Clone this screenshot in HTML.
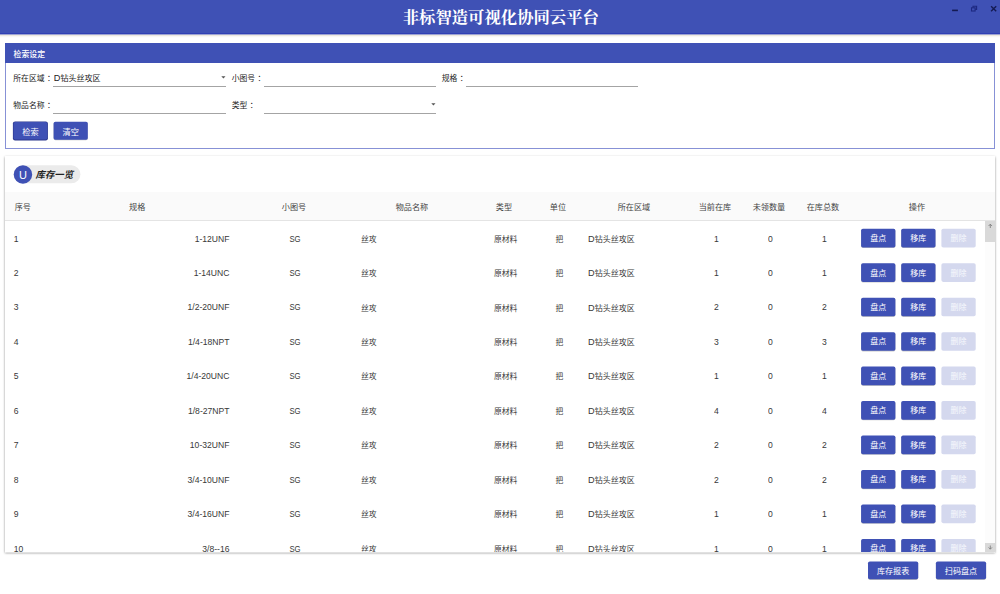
<!DOCTYPE html><html lang="zh-CN"><head><meta charset="utf-8"><title>非标智造可视化协同云平台</title><style>
*{box-sizing:border-box;margin:0;padding:0}
html,body{width:1000px;height:594px;overflow:hidden;background:#fff}
body{position:relative;font-family:"Liberation Sans","Noto Sans CJK SC",sans-serif;color:#222;font-size:7.8px}
.abs{position:absolute}
#titlebar{position:absolute;left:0;top:0;width:1000px;height:38px;background:linear-gradient(to bottom,#3f51b5 0,#3f51b5 33px,#3040b4 33px,#3040b4 34px,#9da3d2 34px,#9da3d2 35px,#ece8e0 35px,#ece8e0 36px,#f8f7f4 36px,#f8f7f4 37px,#fdfdfd 37px,#fdfdfd 38px)}
#title{position:absolute;left:0;width:1000px;top:0;height:34px;line-height:34px;text-align:center;color:#fff;font-family:"Liberation Serif","Noto Serif CJK SC",serif;font-size:16.35px;font-weight:700;padding-top:1.3px;padding-left:1.6px}
#panel{position:absolute;left:5px;top:43px;width:990px;height:106px;border:1px solid #8791d6;background:#fff}
#phead{position:absolute;left:-1px;top:-1px;width:990px;height:20px;background:#3f51b5;color:#fff;line-height:23px;padding-left:8.5px;font-size:7.9px;font-weight:500}
.lbl{position:absolute;height:12px;line-height:12px;white-space:nowrap;color:#222}
.co{position:relative;left:2.4px}
.D{font-size:9.2px;line-height:1px}
.line{position:absolute;height:1px;background:#a4a4a4}
.bt{position:absolute;z-index:1;width:34.3px;height:18px;line-height:18px;font-size:8px;color:#fff;text-align:center;white-space:nowrap}
.bt.dis{color:#f7f8fd}
#card{position:absolute;left:5px;top:156px;width:990px;height:396px;background:#fff;box-shadow:0 0.6px 0 0 #fff,0 1px 2.2px rgba(0,0,0,.45);overflow:hidden}
#thead{position:absolute;left:0;top:36px;width:990px;height:29px;background:#fafafa;border-bottom:1px solid #e4e4e4}
.cell{position:absolute;height:12px;line-height:12px;white-space:nowrap;color:#383838}
.hc{color:#444;font-size:8.15px}
</style></head><body>
<div id="titlebar"></div><div id="title">非标智造可视化协同云平台</div>
<svg class="abs" style="left:945px;top:0" width="55" height="34" viewBox="0 0 55 34"><rect x="7.1" y="9.6" width="5.8" height="1.6" fill="#141a52"/><rect x="26.5" y="7.8" width="3.6" height="3.2" fill="none" stroke="#1d2880" stroke-width="1.1"/><path d="M28 7.6 V6.2 H31.6 V9.4 H30.3" fill="none" stroke="#1d2880" stroke-width="1.1"/><path d="M46.1 6.3 L51.2 11.2 M51.2 6.3 L46.1 11.2" stroke="#141a52" stroke-width="1.4" fill="none"/></svg>
<div id="panel"><div id="phead">检索设定</div></div>
<div class="lbl" style="left:13.3px;top:73.2px;">所在区域<span class="co">：</span></div>
<div class="lbl" style="left:53.8px;top:73.3px;font-size:8.05px"><span class="D" style="font-size:9.2px">D</span>钻头丝攻区</div>
<div class="line" style="left:53px;top:86px;width:173px"></div>
<svg class="abs" style="left:219px;top:74px" width="10" height="8" viewBox="0 0 10 8"><path d="M2.3 2.2 H6.5 L4.4 4.6 Z" fill="#555"/></svg>
<div class="lbl" style="left:231.7px;top:73.2px;">小图号<span class="co">：</span></div>
<div class="line" style="left:264px;top:86px;width:172px"></div>
<div class="lbl" style="left:441.7px;top:73.2px;">规格<span class="co">：</span></div>
<div class="line" style="left:466px;top:86px;width:172px"></div>
<div class="lbl" style="left:13.3px;top:100.2px;">物品名称<span class="co">：</span></div>
<div class="line" style="left:53px;top:113px;width:173px"></div>
<div class="lbl" style="left:231.7px;top:100.2px;">类型<span class="co">：</span></div>
<div class="line" style="left:264px;top:113px;width:172px"></div>
<svg class="abs" style="left:429px;top:101px" width="10" height="8" viewBox="0 0 10 8"><path d="M2.3 2.2 H6.5 L4.4 4.6 Z" fill="#555"/></svg>
<svg class="abs" style="left:5px;top:115px" width="100" height="32" viewBox="0 0 100 32"><rect x="7.9" y="6.4" width="35" height="19.1" rx="2.2" fill="#2b378c"/><rect x="8.5" y="6.9" width="33.8" height="17.6" rx="1.8" fill="#3f51b5"/><rect x="48.6" y="7.3" width="34.2" height="17.9" rx="1.8" fill="rgba(0,0,0,.25)"/><rect x="48.6" y="6.8" width="34.2" height="17.9" rx="1.8" fill="#3f51b5"/></svg>
<div class="bt" style="left:13.3px;top:123.8px;width:34.2px;font-size:8.2px">检索</div>
<div class="bt" style="left:53.6px;top:123.8px;width:34.2px;font-size:8.2px">清空</div>
<div id="card">
<svg class="abs" style="left:0;top:0" width="100" height="36" viewBox="0 0 100 36"><rect x="8.8" y="9.3" width="66.6" height="18" rx="9" fill="#ebebeb"/><circle cx="17.95" cy="18.45" r="9.25" fill="#3f51b5"/></svg>
<div class="abs" style="left:8.7px;top:9.5px;width:18.5px;height:18px;color:#fff;text-align:center;line-height:18px;font-size:11px">U</div>
<div class="abs" style="left:30.5px;top:12.8px;height:12px;line-height:12px;font-size:9.4px;font-weight:700;font-style:italic;color:#222;white-space:nowrap">库存一览</div>
<div id="thead"></div>
<div class="cell hc" style="left:9.7px;top:45.599999999999994px;">序号</div>
<div class="cell hc" style="left:124px;top:45.599999999999994px;">规格</div>
<div class="cell hc" style="left:229px;width:120px;text-align:center;top:45.599999999999994px;">小图号</div>
<div class="cell hc" style="left:347px;width:120px;text-align:center;top:45.599999999999994px;">物品名称</div>
<div class="cell hc" style="left:439px;width:120px;text-align:center;top:45.599999999999994px;">类型</div>
<div class="cell hc" style="left:493px;width:120px;text-align:center;top:45.599999999999994px;">单位</div>
<div class="cell hc" style="left:569px;width:120px;text-align:center;top:45.599999999999994px;">所在区域</div>
<div class="cell hc" style="left:650px;width:120px;text-align:center;top:45.599999999999994px;">当前在库</div>
<div class="cell hc" style="left:704px;width:120px;text-align:center;top:45.599999999999994px;">未领数量</div>
<div class="cell hc" style="left:758px;width:120px;text-align:center;top:45.599999999999994px;">在库总数</div>
<div class="cell hc" style="left:852px;width:120px;text-align:center;top:45.599999999999994px;">操作</div>
<div class="cell " style="left:8.8px;top:76.5px;font-size:8.6px;transform:scale(1,1.13);transform-origin:0 60%">1</div>
<div class="cell " style="right:765.5px;top:76.5px;font-size:8.6px;transform:scale(1,1.13);transform-origin:100% 60%">1-12UNF</div>
<div class="cell " style="left:230.2px;width:120px;text-align:center;top:76.5px;font-size:8.6px;transform:scale(.9,1.13);transform-origin:50% 60%">SG</div>
<div class="cell " style="left:356px;top:77.6px;">丝攻</div>
<div class="cell " style="left:489px;top:77.6px;">原材料</div>
<div class="cell " style="left:494.5px;width:120px;text-align:center;top:77.6px;">把</div>
<div class="cell " style="left:583px;top:77.6px;font-size:8px"><span class="D">D</span>钻头丝攻区</div>
<div class="cell " style="left:651.5px;width:120px;text-align:center;top:76.5px;font-size:8.6px;transform:scale(1,1.13);transform-origin:50% 60%">1</div>
<div class="cell " style="left:705.5px;width:120px;text-align:center;top:76.5px;font-size:8.6px;transform:scale(1,1.13);transform-origin:50% 60%">0</div>
<div class="cell " style="left:759.5px;width:120px;text-align:center;top:76.5px;font-size:8.6px;transform:scale(1,1.13);transform-origin:50% 60%">1</div>
<div class="bt " style="left:856.10px;top:74.05px">盘点</div>
<div class="bt " style="left:896.20px;top:74.05px">移库</div>
<div class="bt dis" style="left:936.40px;top:74.05px">删除</div>
<div class="cell " style="left:8.8px;top:110.95999999999998px;font-size:8.6px;transform:scale(1,1.13);transform-origin:0 60%">2</div>
<div class="cell " style="right:765.5px;top:110.95999999999998px;font-size:8.6px;transform:scale(1,1.13);transform-origin:100% 60%">1-14UNC</div>
<div class="cell " style="left:230.2px;width:120px;text-align:center;top:110.95999999999998px;font-size:8.6px;transform:scale(.9,1.13);transform-origin:50% 60%">SG</div>
<div class="cell " style="left:356px;top:112.06px;">丝攻</div>
<div class="cell " style="left:489px;top:112.06px;">原材料</div>
<div class="cell " style="left:494.5px;width:120px;text-align:center;top:112.06px;">把</div>
<div class="cell " style="left:583px;top:112.06px;font-size:8px"><span class="D">D</span>钻头丝攻区</div>
<div class="cell " style="left:651.5px;width:120px;text-align:center;top:110.95999999999998px;font-size:8.6px;transform:scale(1,1.13);transform-origin:50% 60%">1</div>
<div class="cell " style="left:705.5px;width:120px;text-align:center;top:110.95999999999998px;font-size:8.6px;transform:scale(1,1.13);transform-origin:50% 60%">0</div>
<div class="cell " style="left:759.5px;width:120px;text-align:center;top:110.95999999999998px;font-size:8.6px;transform:scale(1,1.13);transform-origin:50% 60%">1</div>
<div class="bt " style="left:856.10px;top:108.51px">盘点</div>
<div class="bt " style="left:896.20px;top:108.51px">移库</div>
<div class="bt dis" style="left:936.40px;top:108.51px">删除</div>
<div class="cell " style="left:8.8px;top:145.41999999999996px;font-size:8.6px;transform:scale(1,1.13);transform-origin:0 60%">3</div>
<div class="cell " style="right:765.5px;top:145.41999999999996px;font-size:8.6px;transform:scale(1,1.13);transform-origin:100% 60%">1/2-20UNF</div>
<div class="cell " style="left:230.2px;width:120px;text-align:center;top:145.41999999999996px;font-size:8.6px;transform:scale(.9,1.13);transform-origin:50% 60%">SG</div>
<div class="cell " style="left:356px;top:146.51999999999998px;">丝攻</div>
<div class="cell " style="left:489px;top:146.51999999999998px;">原材料</div>
<div class="cell " style="left:494.5px;width:120px;text-align:center;top:146.51999999999998px;">把</div>
<div class="cell " style="left:583px;top:146.51999999999998px;font-size:8px"><span class="D">D</span>钻头丝攻区</div>
<div class="cell " style="left:651.5px;width:120px;text-align:center;top:145.41999999999996px;font-size:8.6px;transform:scale(1,1.13);transform-origin:50% 60%">2</div>
<div class="cell " style="left:705.5px;width:120px;text-align:center;top:145.41999999999996px;font-size:8.6px;transform:scale(1,1.13);transform-origin:50% 60%">0</div>
<div class="cell " style="left:759.5px;width:120px;text-align:center;top:145.41999999999996px;font-size:8.6px;transform:scale(1,1.13);transform-origin:50% 60%">2</div>
<div class="bt " style="left:856.10px;top:142.97px">盘点</div>
<div class="bt " style="left:896.20px;top:142.97px">移库</div>
<div class="bt dis" style="left:936.40px;top:142.97px">删除</div>
<div class="cell " style="left:8.8px;top:179.88px;font-size:8.6px;transform:scale(1,1.13);transform-origin:0 60%">4</div>
<div class="cell " style="right:765.5px;top:179.88px;font-size:8.6px;transform:scale(1,1.13);transform-origin:100% 60%">1/4-18NPT</div>
<div class="cell " style="left:230.2px;width:120px;text-align:center;top:179.88px;font-size:8.6px;transform:scale(.9,1.13);transform-origin:50% 60%">SG</div>
<div class="cell " style="left:356px;top:180.98000000000002px;">丝攻</div>
<div class="cell " style="left:489px;top:180.98000000000002px;">原材料</div>
<div class="cell " style="left:494.5px;width:120px;text-align:center;top:180.98000000000002px;">把</div>
<div class="cell " style="left:583px;top:180.98000000000002px;font-size:8px"><span class="D">D</span>钻头丝攻区</div>
<div class="cell " style="left:651.5px;width:120px;text-align:center;top:179.88px;font-size:8.6px;transform:scale(1,1.13);transform-origin:50% 60%">3</div>
<div class="cell " style="left:705.5px;width:120px;text-align:center;top:179.88px;font-size:8.6px;transform:scale(1,1.13);transform-origin:50% 60%">0</div>
<div class="cell " style="left:759.5px;width:120px;text-align:center;top:179.88px;font-size:8.6px;transform:scale(1,1.13);transform-origin:50% 60%">3</div>
<div class="bt " style="left:856.10px;top:177.43px">盘点</div>
<div class="bt " style="left:896.20px;top:177.43px">移库</div>
<div class="bt dis" style="left:936.40px;top:177.43px">删除</div>
<div class="cell " style="left:8.8px;top:214.33999999999997px;font-size:8.6px;transform:scale(1,1.13);transform-origin:0 60%">5</div>
<div class="cell " style="right:765.5px;top:214.33999999999997px;font-size:8.6px;transform:scale(1,1.13);transform-origin:100% 60%">1/4-20UNC</div>
<div class="cell " style="left:230.2px;width:120px;text-align:center;top:214.33999999999997px;font-size:8.6px;transform:scale(.9,1.13);transform-origin:50% 60%">SG</div>
<div class="cell " style="left:356px;top:215.44px;">丝攻</div>
<div class="cell " style="left:489px;top:215.44px;">原材料</div>
<div class="cell " style="left:494.5px;width:120px;text-align:center;top:215.44px;">把</div>
<div class="cell " style="left:583px;top:215.44px;font-size:8px"><span class="D">D</span>钻头丝攻区</div>
<div class="cell " style="left:651.5px;width:120px;text-align:center;top:214.33999999999997px;font-size:8.6px;transform:scale(1,1.13);transform-origin:50% 60%">1</div>
<div class="cell " style="left:705.5px;width:120px;text-align:center;top:214.33999999999997px;font-size:8.6px;transform:scale(1,1.13);transform-origin:50% 60%">0</div>
<div class="cell " style="left:759.5px;width:120px;text-align:center;top:214.33999999999997px;font-size:8.6px;transform:scale(1,1.13);transform-origin:50% 60%">1</div>
<div class="bt " style="left:856.10px;top:211.89px">盘点</div>
<div class="bt " style="left:896.20px;top:211.89px">移库</div>
<div class="bt dis" style="left:936.40px;top:211.89px">删除</div>
<div class="cell " style="left:8.8px;top:248.79999999999995px;font-size:8.6px;transform:scale(1,1.13);transform-origin:0 60%">6</div>
<div class="cell " style="right:765.5px;top:248.79999999999995px;font-size:8.6px;transform:scale(1,1.13);transform-origin:100% 60%">1/8-27NPT</div>
<div class="cell " style="left:230.2px;width:120px;text-align:center;top:248.79999999999995px;font-size:8.6px;transform:scale(.9,1.13);transform-origin:50% 60%">SG</div>
<div class="cell " style="left:356px;top:249.89999999999998px;">丝攻</div>
<div class="cell " style="left:489px;top:249.89999999999998px;">原材料</div>
<div class="cell " style="left:494.5px;width:120px;text-align:center;top:249.89999999999998px;">把</div>
<div class="cell " style="left:583px;top:249.89999999999998px;font-size:8px"><span class="D">D</span>钻头丝攻区</div>
<div class="cell " style="left:651.5px;width:120px;text-align:center;top:248.79999999999995px;font-size:8.6px;transform:scale(1,1.13);transform-origin:50% 60%">4</div>
<div class="cell " style="left:705.5px;width:120px;text-align:center;top:248.79999999999995px;font-size:8.6px;transform:scale(1,1.13);transform-origin:50% 60%">0</div>
<div class="cell " style="left:759.5px;width:120px;text-align:center;top:248.79999999999995px;font-size:8.6px;transform:scale(1,1.13);transform-origin:50% 60%">4</div>
<div class="bt " style="left:856.10px;top:246.35px">盘点</div>
<div class="bt " style="left:896.20px;top:246.35px">移库</div>
<div class="bt dis" style="left:936.40px;top:246.35px">删除</div>
<div class="cell " style="left:8.8px;top:283.26px;font-size:8.6px;transform:scale(1,1.13);transform-origin:0 60%">7</div>
<div class="cell " style="right:765.5px;top:283.26px;font-size:8.6px;transform:scale(1,1.13);transform-origin:100% 60%">10-32UNF</div>
<div class="cell " style="left:230.2px;width:120px;text-align:center;top:283.26px;font-size:8.6px;transform:scale(.9,1.13);transform-origin:50% 60%">SG</div>
<div class="cell " style="left:356px;top:284.36px;">丝攻</div>
<div class="cell " style="left:489px;top:284.36px;">原材料</div>
<div class="cell " style="left:494.5px;width:120px;text-align:center;top:284.36px;">把</div>
<div class="cell " style="left:583px;top:284.36px;font-size:8px"><span class="D">D</span>钻头丝攻区</div>
<div class="cell " style="left:651.5px;width:120px;text-align:center;top:283.26px;font-size:8.6px;transform:scale(1,1.13);transform-origin:50% 60%">2</div>
<div class="cell " style="left:705.5px;width:120px;text-align:center;top:283.26px;font-size:8.6px;transform:scale(1,1.13);transform-origin:50% 60%">0</div>
<div class="cell " style="left:759.5px;width:120px;text-align:center;top:283.26px;font-size:8.6px;transform:scale(1,1.13);transform-origin:50% 60%">2</div>
<div class="bt " style="left:856.10px;top:280.81px">盘点</div>
<div class="bt " style="left:896.20px;top:280.81px">移库</div>
<div class="bt dis" style="left:936.40px;top:280.81px">删除</div>
<div class="cell " style="left:8.8px;top:317.71999999999997px;font-size:8.6px;transform:scale(1,1.13);transform-origin:0 60%">8</div>
<div class="cell " style="right:765.5px;top:317.71999999999997px;font-size:8.6px;transform:scale(1,1.13);transform-origin:100% 60%">3/4-10UNF</div>
<div class="cell " style="left:230.2px;width:120px;text-align:center;top:317.71999999999997px;font-size:8.6px;transform:scale(.9,1.13);transform-origin:50% 60%">SG</div>
<div class="cell " style="left:356px;top:318.82px;">丝攻</div>
<div class="cell " style="left:489px;top:318.82px;">原材料</div>
<div class="cell " style="left:494.5px;width:120px;text-align:center;top:318.82px;">把</div>
<div class="cell " style="left:583px;top:318.82px;font-size:8px"><span class="D">D</span>钻头丝攻区</div>
<div class="cell " style="left:651.5px;width:120px;text-align:center;top:317.71999999999997px;font-size:8.6px;transform:scale(1,1.13);transform-origin:50% 60%">2</div>
<div class="cell " style="left:705.5px;width:120px;text-align:center;top:317.71999999999997px;font-size:8.6px;transform:scale(1,1.13);transform-origin:50% 60%">0</div>
<div class="cell " style="left:759.5px;width:120px;text-align:center;top:317.71999999999997px;font-size:8.6px;transform:scale(1,1.13);transform-origin:50% 60%">2</div>
<div class="bt " style="left:856.10px;top:315.27px">盘点</div>
<div class="bt " style="left:896.20px;top:315.27px">移库</div>
<div class="bt dis" style="left:936.40px;top:315.27px">删除</div>
<div class="cell " style="left:8.8px;top:352.17999999999995px;font-size:8.6px;transform:scale(1,1.13);transform-origin:0 60%">9</div>
<div class="cell " style="right:765.5px;top:352.17999999999995px;font-size:8.6px;transform:scale(1,1.13);transform-origin:100% 60%">3/4-16UNF</div>
<div class="cell " style="left:230.2px;width:120px;text-align:center;top:352.17999999999995px;font-size:8.6px;transform:scale(.9,1.13);transform-origin:50% 60%">SG</div>
<div class="cell " style="left:356px;top:353.28px;">丝攻</div>
<div class="cell " style="left:489px;top:353.28px;">原材料</div>
<div class="cell " style="left:494.5px;width:120px;text-align:center;top:353.28px;">把</div>
<div class="cell " style="left:583px;top:353.28px;font-size:8px"><span class="D">D</span>钻头丝攻区</div>
<div class="cell " style="left:651.5px;width:120px;text-align:center;top:352.17999999999995px;font-size:8.6px;transform:scale(1,1.13);transform-origin:50% 60%">1</div>
<div class="cell " style="left:705.5px;width:120px;text-align:center;top:352.17999999999995px;font-size:8.6px;transform:scale(1,1.13);transform-origin:50% 60%">0</div>
<div class="cell " style="left:759.5px;width:120px;text-align:center;top:352.17999999999995px;font-size:8.6px;transform:scale(1,1.13);transform-origin:50% 60%">1</div>
<div class="bt " style="left:856.10px;top:349.73px">盘点</div>
<div class="bt " style="left:896.20px;top:349.73px">移库</div>
<div class="bt dis" style="left:936.40px;top:349.73px">删除</div>
<div class="cell " style="left:8.8px;top:386.64px;font-size:8.6px;transform:scale(1,1.13);transform-origin:0 60%">10</div>
<div class="cell " style="right:765.5px;top:386.64px;font-size:8.6px;transform:scale(1,1.13);transform-origin:100% 60%">3/8--16</div>
<div class="cell " style="left:230.2px;width:120px;text-align:center;top:386.64px;font-size:8.6px;transform:scale(.9,1.13);transform-origin:50% 60%">SG</div>
<div class="cell " style="left:356px;top:387.74px;">丝攻</div>
<div class="cell " style="left:489px;top:387.74px;">原材料</div>
<div class="cell " style="left:494.5px;width:120px;text-align:center;top:387.74px;">把</div>
<div class="cell " style="left:583px;top:387.74px;font-size:8px"><span class="D">D</span>钻头丝攻区</div>
<div class="cell " style="left:651.5px;width:120px;text-align:center;top:386.64px;font-size:8.6px;transform:scale(1,1.13);transform-origin:50% 60%">1</div>
<div class="cell " style="left:705.5px;width:120px;text-align:center;top:386.64px;font-size:8.6px;transform:scale(1,1.13);transform-origin:50% 60%">0</div>
<div class="cell " style="left:759.5px;width:120px;text-align:center;top:386.64px;font-size:8.6px;transform:scale(1,1.13);transform-origin:50% 60%">1</div>
<div class="bt " style="left:856.10px;top:384.19px">盘点</div>
<div class="bt " style="left:896.20px;top:384.19px">移库</div>
<div class="bt dis" style="left:936.40px;top:384.19px">删除</div>
<svg class="abs" style="left:0;top:0;z-index:0" width="990" height="396" viewBox="0 0 990 396"><rect x="856.10" y="73.35" width="34.3" height="18.7" rx="1.8" fill="rgba(0,0,0,.22)"/><rect x="856.10" y="72.75" width="34.3" height="18.7" rx="1.8" fill="#3f51b5"/><rect x="896.20" y="73.35" width="34.3" height="18.7" rx="1.8" fill="rgba(0,0,0,.22)"/><rect x="896.20" y="72.75" width="34.3" height="18.7" rx="1.8" fill="#3f51b5"/><rect x="936.40" y="72.75" width="34.3" height="18.7" rx="1.8" fill="#d4d8ee"/><rect x="856.10" y="107.81" width="34.3" height="18.7" rx="1.8" fill="rgba(0,0,0,.22)"/><rect x="856.10" y="107.21" width="34.3" height="18.7" rx="1.8" fill="#3f51b5"/><rect x="896.20" y="107.81" width="34.3" height="18.7" rx="1.8" fill="rgba(0,0,0,.22)"/><rect x="896.20" y="107.21" width="34.3" height="18.7" rx="1.8" fill="#3f51b5"/><rect x="936.40" y="107.21" width="34.3" height="18.7" rx="1.8" fill="#d4d8ee"/><rect x="856.10" y="142.27" width="34.3" height="18.7" rx="1.8" fill="rgba(0,0,0,.22)"/><rect x="856.10" y="141.67" width="34.3" height="18.7" rx="1.8" fill="#3f51b5"/><rect x="896.20" y="142.27" width="34.3" height="18.7" rx="1.8" fill="rgba(0,0,0,.22)"/><rect x="896.20" y="141.67" width="34.3" height="18.7" rx="1.8" fill="#3f51b5"/><rect x="936.40" y="141.67" width="34.3" height="18.7" rx="1.8" fill="#d4d8ee"/><rect x="856.10" y="176.73" width="34.3" height="18.7" rx="1.8" fill="rgba(0,0,0,.22)"/><rect x="856.10" y="176.13" width="34.3" height="18.7" rx="1.8" fill="#3f51b5"/><rect x="896.20" y="176.73" width="34.3" height="18.7" rx="1.8" fill="rgba(0,0,0,.22)"/><rect x="896.20" y="176.13" width="34.3" height="18.7" rx="1.8" fill="#3f51b5"/><rect x="936.40" y="176.13" width="34.3" height="18.7" rx="1.8" fill="#d4d8ee"/><rect x="856.10" y="211.19" width="34.3" height="18.7" rx="1.8" fill="rgba(0,0,0,.22)"/><rect x="856.10" y="210.59" width="34.3" height="18.7" rx="1.8" fill="#3f51b5"/><rect x="896.20" y="211.19" width="34.3" height="18.7" rx="1.8" fill="rgba(0,0,0,.22)"/><rect x="896.20" y="210.59" width="34.3" height="18.7" rx="1.8" fill="#3f51b5"/><rect x="936.40" y="210.59" width="34.3" height="18.7" rx="1.8" fill="#d4d8ee"/><rect x="856.10" y="245.65" width="34.3" height="18.7" rx="1.8" fill="rgba(0,0,0,.22)"/><rect x="856.10" y="245.05" width="34.3" height="18.7" rx="1.8" fill="#3f51b5"/><rect x="896.20" y="245.65" width="34.3" height="18.7" rx="1.8" fill="rgba(0,0,0,.22)"/><rect x="896.20" y="245.05" width="34.3" height="18.7" rx="1.8" fill="#3f51b5"/><rect x="936.40" y="245.05" width="34.3" height="18.7" rx="1.8" fill="#d4d8ee"/><rect x="856.10" y="280.11" width="34.3" height="18.7" rx="1.8" fill="rgba(0,0,0,.22)"/><rect x="856.10" y="279.51" width="34.3" height="18.7" rx="1.8" fill="#3f51b5"/><rect x="896.20" y="280.11" width="34.3" height="18.7" rx="1.8" fill="rgba(0,0,0,.22)"/><rect x="896.20" y="279.51" width="34.3" height="18.7" rx="1.8" fill="#3f51b5"/><rect x="936.40" y="279.51" width="34.3" height="18.7" rx="1.8" fill="#d4d8ee"/><rect x="856.10" y="314.57" width="34.3" height="18.7" rx="1.8" fill="rgba(0,0,0,.22)"/><rect x="856.10" y="313.97" width="34.3" height="18.7" rx="1.8" fill="#3f51b5"/><rect x="896.20" y="314.57" width="34.3" height="18.7" rx="1.8" fill="rgba(0,0,0,.22)"/><rect x="896.20" y="313.97" width="34.3" height="18.7" rx="1.8" fill="#3f51b5"/><rect x="936.40" y="313.97" width="34.3" height="18.7" rx="1.8" fill="#d4d8ee"/><rect x="856.10" y="349.03" width="34.3" height="18.7" rx="1.8" fill="rgba(0,0,0,.22)"/><rect x="856.10" y="348.43" width="34.3" height="18.7" rx="1.8" fill="#3f51b5"/><rect x="896.20" y="349.03" width="34.3" height="18.7" rx="1.8" fill="rgba(0,0,0,.22)"/><rect x="896.20" y="348.43" width="34.3" height="18.7" rx="1.8" fill="#3f51b5"/><rect x="936.40" y="348.43" width="34.3" height="18.7" rx="1.8" fill="#d4d8ee"/><rect x="856.10" y="383.49" width="34.3" height="18.7" rx="1.8" fill="rgba(0,0,0,.22)"/><rect x="856.10" y="382.89" width="34.3" height="18.7" rx="1.8" fill="#3f51b5"/><rect x="896.20" y="383.49" width="34.3" height="18.7" rx="1.8" fill="rgba(0,0,0,.22)"/><rect x="896.20" y="382.89" width="34.3" height="18.7" rx="1.8" fill="#3f51b5"/><rect x="936.40" y="382.89" width="34.3" height="18.7" rx="1.8" fill="#d4d8ee"/></svg>
<div class="abs" style="left:980px;top:65px;width:10px;height:331px;background:#fcfcfc"></div>
<div class="abs" style="left:980px;top:65px;width:10px;height:21px;background:#d9d9d9"></div>
<div class="abs" style="left:980px;top:387px;width:10px;height:9px;background:#d9d9d9"></div>
<svg class="abs" style="left:980px;top:65px" width="10" height="331" viewBox="0 0 10 331"><path d="M5.3 7 V3.3 M3.6 5 L5.3 3.2 L7 5" fill="none" stroke="#777" stroke-width="0.8"/><path d="M5.3 324.5 V328.1 M3.6 326.4 L5.3 328.2 L7 326.4" fill="none" stroke="#777" stroke-width="0.8"/></svg>
</div>
<svg class="abs" style="left:860px;top:555px" width="140" height="39" viewBox="0 0 140 39"><rect x="8" y="7.1" width="50.2" height="17.8" rx="1.8" fill="rgba(0,0,0,.25)"/><rect x="8" y="6.5" width="50.2" height="17.8" rx="1.8" fill="#3f51b5"/><rect x="75.9" y="7.1" width="50.2" height="17.8" rx="1.8" fill="rgba(0,0,0,.25)"/><rect x="75.9" y="6.5" width="50.2" height="17.8" rx="1.8" fill="#3f51b5"/></svg>
<div class="bt" style="left:868px;top:562.5px;width:50.2px;font-size:8.1px">库存报表</div>
<div class="bt" style="left:935.9px;top:562.5px;width:50.2px;font-size:8.1px">扫码盘点</div>
</body></html>
